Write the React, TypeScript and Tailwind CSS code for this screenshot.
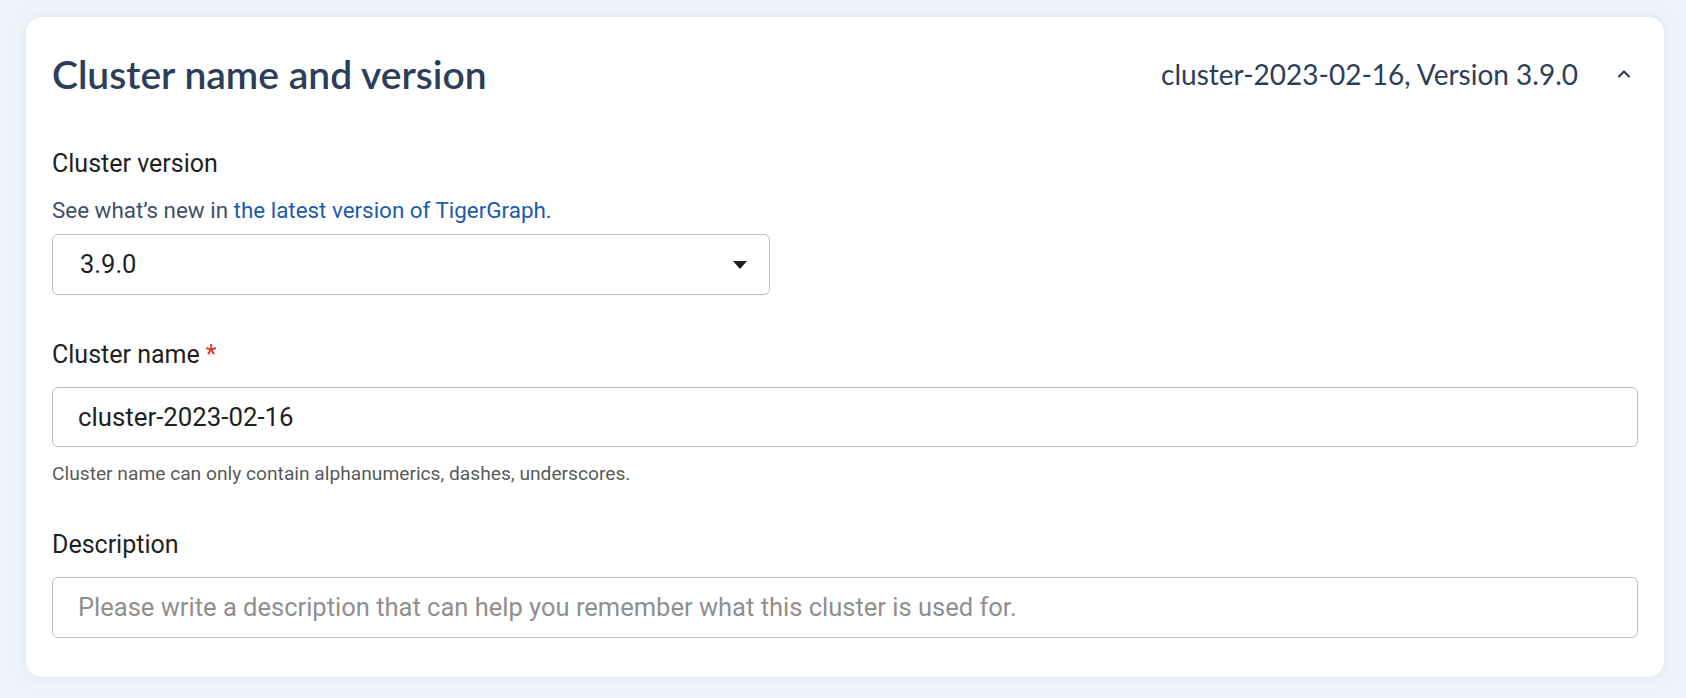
import React from 'react';
import { ChevronUp } from 'lucide-react';

const roboto = { fontFamily: 'Roboto, "Noto Sans", sans-serif' };

function Field({ label, required, children }: { label: string; required?: boolean; children?: React.ReactNode }) {
  return (
    <div>
      <div className="text-[25px] leading-[28px] text-[#1f1f1f]">
        {label}
        {required && <span className="text-[#e0301e] ml-[6px]">*</span>}
      </div>
      {children}
    </div>
  );
}

export default function App() {
  return (
    <div className="min-h-screen w-full bg-[#eff4fa] pt-[17px] pl-[26px] pr-[22px]" style={roboto}>
      <div className="bg-white rounded-[16px] shadow-[0_0_12px_rgba(180,200,230,0.35)] px-[26px] pb-[39px]">
        <div className="h-[114px] flex items-center justify-between">
          <h1 className="text-[39px] font-semibold text-[#2c3e58] font-['Lato',sans-serif]">
            Cluster name and version
          </h1>
          <div className="flex items-center gap-[36px] pr-[4px]">
            <span className="text-[28px] text-[#2c3e58] font-['Lato',sans-serif]">cluster-2023-02-16, Version 3.9.0</span>
            <ChevronUp size={20} strokeWidth={2.6} className="text-[#2c3e58]" />
          </div>
        </div>

        <div className="mt-[19px]">
          <Field label="Cluster version">
            <p className="mt-[20px] text-[22.4px] leading-[24px] text-[#3e5068]">
              See what’s new in <a className="text-[#1c5bab]" href="#">the latest version of TigerGraph</a>.
            </p>
            <div className="mt-[12px] w-[718px] h-[61px] border border-[#b7bfcb] rounded-[6px] flex items-center justify-between pl-[27px] pr-[22px]">
              <span className="text-[25.5px] text-[#1f1f1f]">3.9.0</span>
              <svg width="14" height="8" viewBox="0 0 14 8">
                <path d="M0 0 L14 0 L7 8 Z" fill="#1f1f1f" />
              </svg>
            </div>
          </Field>
        </div>

        <div className="mt-[46px]">
          <Field label="Cluster name" required>
            <div className="mt-[18px] h-[60px] border border-[#b7bfcb] rounded-[6px] flex items-center pl-[25px]">
              <span className="text-[25.8px] text-[#1f1f1f]">cluster-2023-02-16</span>
            </div>
            <p className="mt-[17px] text-[19.2px] leading-[20px] text-[#5a5a5a]">
              Cluster name can only contain alphanumerics, dashes, underscores.
            </p>
          </Field>
        </div>

        <div className="mt-[47px]">
          <Field label="Description">
            <div className="mt-[18px] h-[61px] border border-[#b7bfcb] rounded-[6px] flex items-center pl-[25px]">
              <span className="text-[25.5px] text-[#8f8f8f]">
                Please write a description that can help you remember what this cluster is used for.
              </span>
            </div>
          </Field>
        </div>
      </div>
    </div>
  );
}
